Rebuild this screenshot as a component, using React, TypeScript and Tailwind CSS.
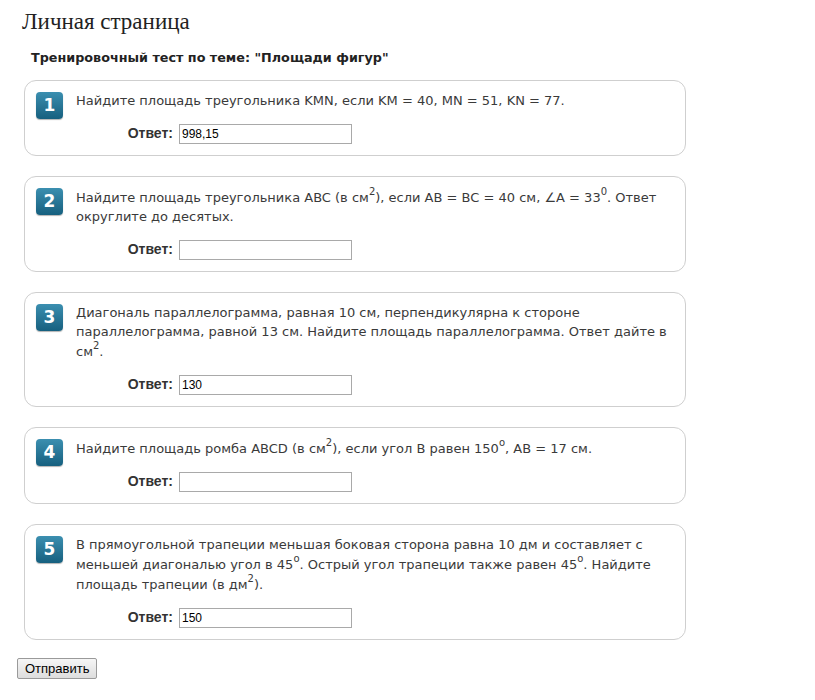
import React from "react";

type Question = {
  n: number;
  text: React.ReactNode;
  answer: string;
};

const questions: Question[] = [
  {
    n: 1,
    text: <>Найдите площадь треугольника KMN, если KM = 40, MN = 51, KN = 77.</>,
    answer: "998,15",
  },
  {
    n: 2,
    text: (
      <>
        Найдите площадь треугольника ABC (в см<sup>2</sup>), если AB = BC = 40 см, ∠A = 33<sup>0</sup>. Ответ
        <br />
        округлите до десятых.
      </>
    ),
    answer: "",
  },
  {
    n: 3,
    text: (
      <>
        Диагональ параллелограмма, равная 10 см, перпендикулярна к стороне параллелограмма, равной 13 см. Найдите
        площадь параллелограмма. Ответ дайте в см<sup>2</sup>.
      </>
    ),
    answer: "130",
  },
  {
    n: 4,
    text: (
      <>
        Найдите площадь ромба ABCD (в см<sup>2</sup>), если угол B равен 150<sup>o</sup>, AB = 17 см.
      </>
    ),
    answer: "",
  },
  {
    n: 5,
    text: (
      <>
        В прямоугольной трапеции меньшая боковая сторона равна 10 дм и составляет с меньшей диагональю угол в 45
        <sup>o</sup>. Острый угол трапеции также равен 45<sup>o</sup>. Найдите площадь трапеции (в дм<sup>2</sup>).
      </>
    ),
    answer: "150",
  },
];

function Badge({ n }: { n: number }) {
  return (
    <div className="mt-[1px] flex h-[27px] w-[27px] shrink-0 items-center justify-center rounded-[4px] bg-gradient-to-b from-[#3b8fb0] to-[#16607f] text-[17px] font-bold text-white shadow-[0_1px_1px_rgba(0,0,0,0.3)] [font-family:'DejaVu_Sans',sans-serif]">
      {n}
    </div>
  );
}

function QuestionCard({ q }: { q: Question }) {
  return (
    <div className="flex gap-[13px] rounded-[12px] border border-[#cfcfcf] bg-white pt-[10px] pr-[10px] pb-[11px] pl-[11px]">
      <Badge n={q.n} />
      <div className="flex-1">
        <p className="text-[13px] leading-[19px] text-[#3a3a3a] [font-family:'DejaVu_Sans',sans-serif] [&_sup]:static [&_sup]:align-[7px] [&_sup]:text-[10px] [&_sup]:leading-none">
          {q.text}
        </p>
        <div className="mt-[13px] flex items-center gap-[6px]">
          <span className="w-[97px] text-right text-[14px] font-bold text-[#333] [font-family:'Liberation_Sans',Arial,sans-serif]">
            Ответ:
          </span>
          <input
            type="text"
            defaultValue={q.answer}
            className="h-[20px] w-[173px] border border-[#a9a9a9] bg-white px-[2px] text-[12px] text-black outline-none [font-family:'Liberation_Sans',Arial,sans-serif]"
          />
        </div>
      </div>
    </div>
  );
}

export default function App() {
  return (
    <div className="min-h-[700px] w-[815px] bg-white pt-[8px] pl-[22px]">
      <h1 className="text-[23px] leading-[28px] text-[#222] [font-family:'Liberation_Serif',serif]">Личная страница</h1>
      <h2 className="mt-[12px] ml-[9px] text-[12.75px] font-bold text-[#222] [font-family:'DejaVu_Sans',sans-serif]">
        Тренировочный тест по теме: "Площади фигур"
      </h2>
      <div className="mt-[13px] ml-[2px] flex w-[662px] flex-col gap-[20px]">
        {questions.map((q) => (
          <QuestionCard key={q.n} q={q} />
        ))}
      </div>
      <button className="mt-[18px] -ml-[5px] h-[21px] rounded-[2px] border border-[#9a9a9a] bg-gradient-to-b from-[#f6f6f6] to-[#dddddd] px-[7px] text-[13px] text-black [font-family:'Liberation_Sans',Arial,sans-serif]">
        Отправить
      </button>
    </div>
  );
}
